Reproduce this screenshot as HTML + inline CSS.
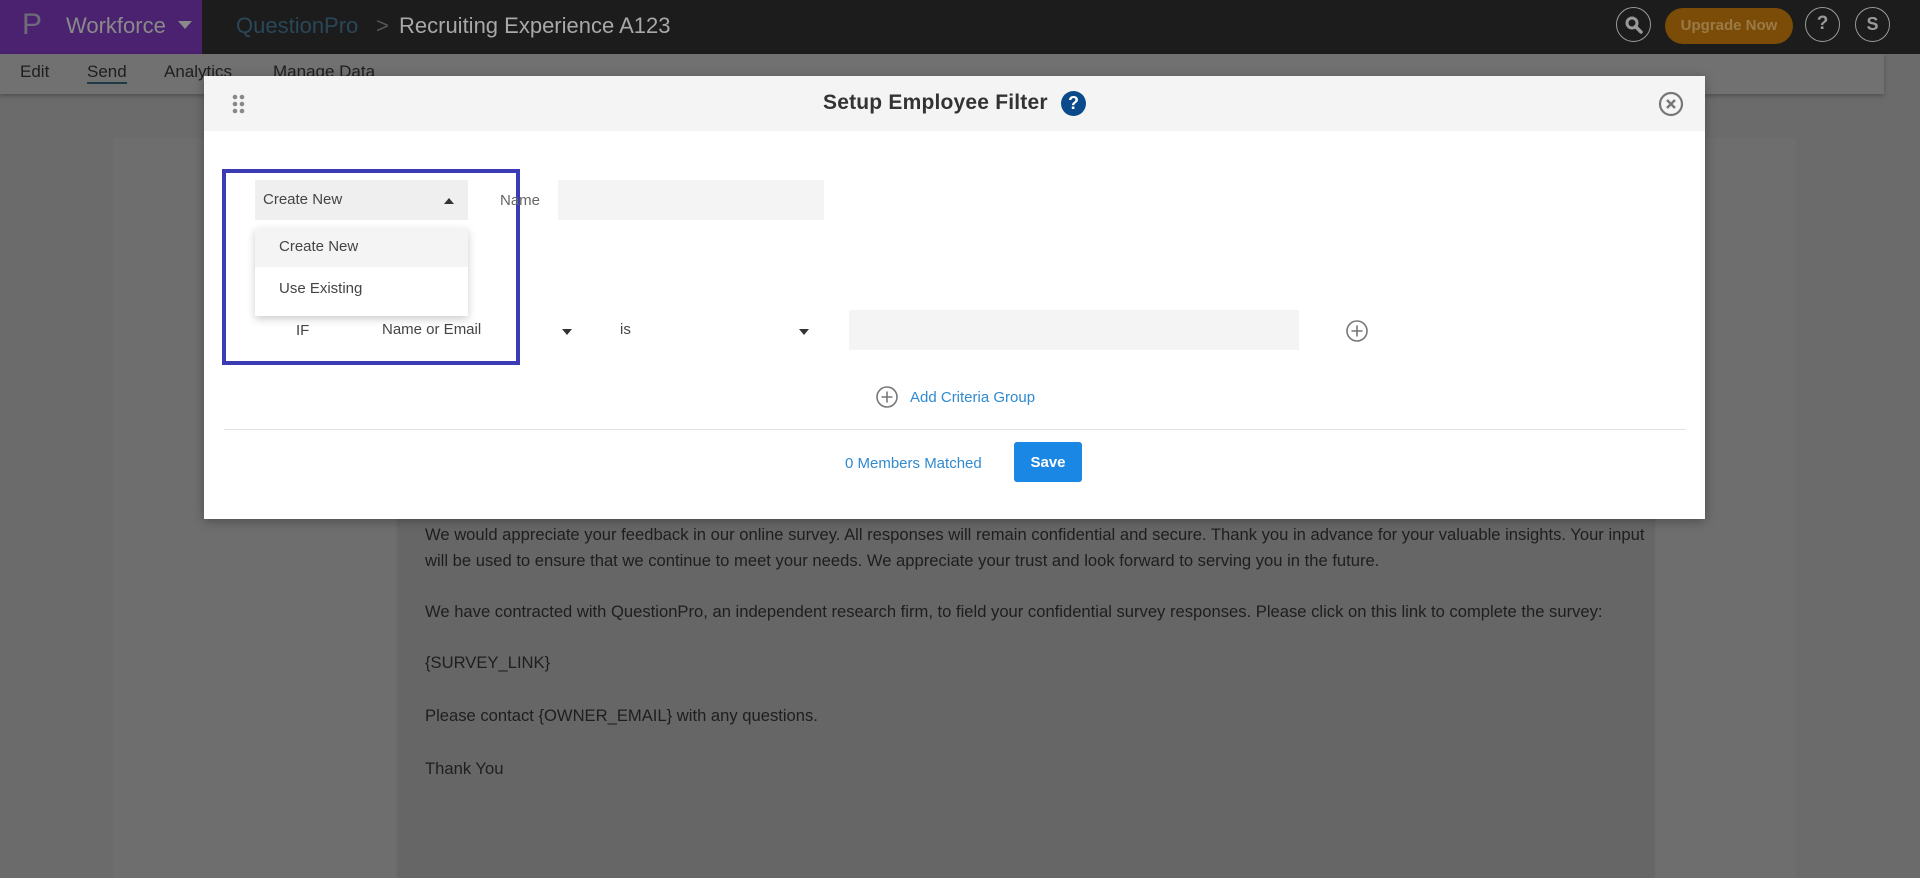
<!DOCTYPE html>
<html><head><meta charset="utf-8"><style>
*{box-sizing:border-box;margin:0;padding:0}
body{width:1920px;height:878px;overflow:hidden;background:#6b6b6b;font-family:"Liberation Sans",sans-serif;position:relative}
.abs{position:absolute}
.top{left:0;top:0;width:1920px;height:54px;background:#1c1c1c}
.purple{left:0;top:0;width:202px;height:54px;background:#4a2270}
.sub{left:0;top:54px;width:1884px;height:40px;background:#717171;box-shadow:0 2px 4px rgba(0,0,0,.25)}
.sub span{position:absolute;top:8px;font-size:17px;color:#1e1e1e}
.panel{left:113px;top:138px;width:1683px;height:740px;background:#6e6e6e}
.paper{left:399px;top:138px;width:1254px;height:740px;background:#666;box-shadow:0 0 4px rgba(0,0,0,.2)}
.bt{left:425px;font-size:16.6px;color:#1e1e1e;white-space:nowrap}
.modal{left:204px;top:76px;width:1501px;height:443px;background:#fff;box-shadow:0 2px 10px rgba(0,0,0,.3)}
.mh{left:0;top:0;width:1501px;height:55px;background:#f4f4f4}
.t{color:#444;font-size:15px;white-space:nowrap}
.circ{border-radius:50%;border:1.5px solid #bbb}
</style></head><body>
<div class="abs top"></div>
<div class="abs purple"></div>
<div class="abs" style="left:22px;top:8px;font-size:30px;color:#6e6a78">P</div>
<div class="abs" style="left:66px;top:13px;font-size:22px;color:#8a8a8a">Workforce</div>
<div class="abs" style="left:178px;top:21px;width:0;height:0;border-left:7px solid transparent;border-right:7px solid transparent;border-top:8px solid #8a8a8a"></div>
<div class="abs" style="left:236px;top:13px;font-size:22px;color:#2a4758">QuestionPro</div>
<div class="abs" style="left:376px;top:13px;font-size:22px;color:#555">&gt;</div>
<div class="abs" style="left:399px;top:13px;font-size:22px;color:#a8a8a8">Recruiting Experience A123</div>
<div class="abs circ" style="left:1616px;top:7px;width:35px;height:35px;border-color:#999"></div>
<svg class="abs" style="left:1623px;top:14px" width="22" height="22"><circle cx="9" cy="9" r="5" fill="none" stroke="#999" stroke-width="3"/><line x1="12.5" y1="12.5" x2="18" y2="18" stroke="#999" stroke-width="3.5" stroke-linecap="round"/></svg>
<div class="abs" style="left:1665px;top:8px;width:128px;height:36px;border-radius:18px;background:#7a4c08;color:#9b7a45;font-size:15px;font-weight:bold;text-align:center;line-height:36px">Upgrade Now</div>
<div class="abs circ" style="left:1805px;top:7px;width:35px;height:35px;border-color:#999;color:#999;font-weight:bold;font-size:19px;text-align:center;line-height:32px">?</div>
<div class="abs circ" style="left:1855px;top:7px;width:35px;height:35px;border-color:#999;color:#999;font-weight:bold;font-size:18px;text-align:center;line-height:32px">S</div>
<div class="abs sub"><span style="left:20px">Edit</span><span style="left:87px;border-bottom:2px solid #1e3a44">Send</span><span style="left:164px">Analytics</span><span style="left:273px">Manage Data</span></div>
<div class="abs panel"></div>
<div class="abs paper"></div>
<div class="abs bt" style="top:525px">We would appreciate your feedback in our online survey. All responses will remain confidential and secure. Thank you in advance for your valuable insights. Your input</div>
<div class="abs bt" style="top:551px">will be used to ensure that we continue to meet your needs. We appreciate your trust and look forward to serving you in the future.</div>
<div class="abs bt" style="top:602px">We have contracted with QuestionPro, an independent research firm, to field your confidential survey responses. Please click on this link to complete the survey:</div>
<div class="abs bt" style="top:653px">{SURVEY_LINK}</div>
<div class="abs bt" style="top:706px">Please contact {OWNER_EMAIL} with any questions.</div>
<div class="abs bt" style="top:759px">Thank You</div>

<div class="abs modal">
 <div class="abs mh"></div>
 <svg class="abs" style="left:28px;top:18px" width="14" height="22"><g fill="#888"><circle cx="3" cy="3" r="2.3"/><circle cx="10" cy="3" r="2.3"/><circle cx="3" cy="10" r="2.3"/><circle cx="10" cy="10" r="2.3"/><circle cx="3" cy="17" r="2.3"/><circle cx="10" cy="17" r="2.3"/></g></svg>
 <div class="abs" style="left:619px;top:15px;font-size:21px;color:#333;font-weight:bold;letter-spacing:.2px">Setup Employee Filter</div>
 <div class="abs" style="left:857px;top:15px;width:25px;height:25px;border-radius:50%;background:#0b4a8a;color:#fff;font-weight:bold;font-size:18px;text-align:center;line-height:25px">?</div>
 <svg class="abs" style="left:1454px;top:15px" width="26" height="26"><circle cx="13" cy="13" r="11" fill="none" stroke="#777" stroke-width="2.2"/><path d="M9 9L17 17M17 9L9 17" stroke="#777" stroke-width="2.5"/></svg>

 <div class="abs" style="left:18px;top:93px;width:298px;height:196px;border:4px solid #3b3bb5"></div>
 <div class="abs" style="left:51px;top:104px;width:213px;height:40px;background:#efefef"></div>
 <div class="abs t" style="left:59px;top:115px">Create New</div>
 <div class="abs" style="left:240px;top:122px;width:0;height:0;border-left:5px solid transparent;border-right:5px solid transparent;border-bottom:6px solid #333"></div>
 <div class="abs t" style="left:296px;top:116px;color:#666">Name</div>
 <div class="abs" style="left:354px;top:104px;width:266px;height:40px;background:#f4f4f4"></div>
 <div class="abs" style="left:51px;top:152px;width:213px;height:88px;background:#fff;box-shadow:0 3px 8px rgba(0,0,0,.2)"></div>
 <div class="abs" style="left:51px;top:152px;width:213px;height:39px;background:#f4f4f4"></div>
 <div class="abs t" style="left:75px;top:162px">Create New</div>
 <div class="abs t" style="left:75px;top:204px">Use Existing</div>
 <div class="abs t" style="left:92px;top:246px">IF</div>
 <div class="abs t" style="left:178px;top:245px">Name or Email</div>
 <div class="abs" style="left:358px;top:253px;width:0;height:0;border-left:5px solid transparent;border-right:5px solid transparent;border-top:6px solid #333"></div>
 <div class="abs t" style="left:416px;top:245px">is</div>
 <div class="abs" style="left:595px;top:253px;width:0;height:0;border-left:5px solid transparent;border-right:5px solid transparent;border-top:6px solid #333"></div>
 <div class="abs" style="left:645px;top:234px;width:450px;height:40px;background:#f4f4f4"></div>
 <svg class="abs" style="left:1141px;top:243px" width="24" height="24"><circle cx="12" cy="12" r="10" fill="none" stroke="#777" stroke-width="1.6"/><path d="M12 6.5V17.5M6.5 12H17.5" stroke="#777" stroke-width="1.6"/></svg>
 <svg class="abs" style="left:671px;top:309px" width="24" height="24"><circle cx="12" cy="12" r="10" fill="none" stroke="#777" stroke-width="1.6"/><path d="M12 6.5V17.5M6.5 12H17.5" stroke="#777" stroke-width="1.6"/></svg>
 <div class="abs" style="left:706px;top:313px;font-size:15px;color:#2f8ad0">Add Criteria Group</div>
 <div class="abs" style="left:20px;top:353px;width:1462px;height:1px;background:#e2e2e2"></div>
 <div class="abs" style="left:641px;top:379px;font-size:15px;color:#2f8ad0">0 Members Matched</div>
 <div class="abs" style="left:810px;top:366px;width:68px;height:40px;border-radius:3px;background:#1b87e5;color:#fff;font-size:15px;font-weight:bold;text-align:center;line-height:41px">Save</div>
</div>
</body></html>
